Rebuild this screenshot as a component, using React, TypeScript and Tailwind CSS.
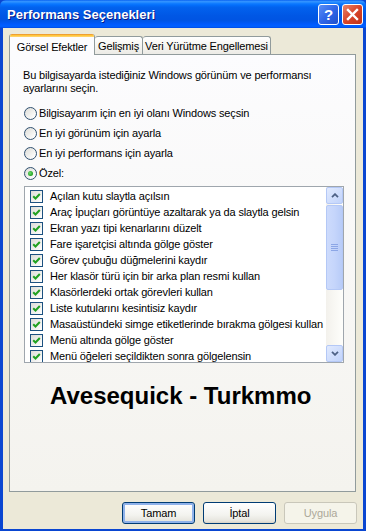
import React from "react";

const items = [
  "Açılan kutu slaytla açılsın",
  "Araç İpuçları görüntüye azaltarak ya da slaytla gelsin",
  "Ekran yazı tipi kenarlarını düzelt",
  "Fare işaretçisi altında gölge göster",
  "Görev çubuğu düğmelerini kaydır",
  "Her klasör türü için bir arka plan resmi kullan",
  "Klasörlerdeki ortak görevleri kullan",
  "Liste kutularını kesintisiz kaydır",
  "Masaüstündeki simge etiketlerinde bırakma gölgesi kullan",
  "Menü altında gölge göster",
  "Menü öğeleri seçildikten sonra gölgelensin",
];

function Check() {
  return (
    <div className="w-[13px] h-[13px] shrink-0 border border-[#1C5180] bg-[linear-gradient(135deg,#dcdcd7_0%,#ffffff_100%)] flex items-center justify-center">
      <svg width="9" height="9" viewBox="0 0 9 9">
        <path d="M1.2 4.2 L3.5 6.5 L7.8 2" stroke="#21A121" strokeWidth="2" fill="none" />
      </svg>
    </div>
  );
}

function Radio({ on }: { on?: boolean }) {
  return (
    <div className="w-[13px] h-[13px] shrink-0 rounded-full border border-[#2F4F6F] bg-[linear-gradient(135deg,#dcdcd7_0%,#ffffff_90%)] flex items-center justify-center">
      {on && <div className="w-[5px] h-[5px] rounded-full bg-[radial-gradient(circle_at_40%_40%,#6fdc6f_0%,#21a121_70%)]" />}
    </div>
  );
}

function Btn({ label, def, disabled }: { label: string; def?: boolean; disabled?: boolean }) {
  return (
    <div
      className={
        "w-[73px] h-[22px] rounded-[3px] border flex items-center justify-center text-[11px] " +
        (disabled
          ? "border-[#C9C7BA] bg-[#F5F4EA] text-[#ACA899]"
          : "border-[#003C74] text-black bg-[linear-gradient(to_bottom,#ffffff_0%,#f3f3ef_60%,#e6e5de_90%,#d6d0c5_100%)]") +
        (def ? " shadow-[inset_0_0_0_2px_#8FB2EA]" : "")
      }
    >
      {label}
    </div>
  );
}

export default function App() {
  return (
    <div className="w-[366px] h-[531px] flex flex-col bg-[#0A46D1] font-['Liberation_Sans',sans-serif] text-[11px] tracking-[-0.15px] text-black overflow-hidden">
      {/* title bar */}
      <div className="h-[28px] shrink-0 flex items-center pl-[7px] pr-[3px] rounded-t-[6px] bg-[linear-gradient(to_bottom,#0058EE_0%,#3593FF_4%,#288EFF_8%,#127DFF_12%,#036FFC_18%,#0262EE_26%,#0057E5_56%,#0054E3_72%,#005BFF_88%,#0061FF_94%,#0048E6_100%)]">
        <div className="flex-1 text-white font-bold text-[13px] tracking-normal [text-shadow:1px_1px_#0A1883] pt-[1px]">
          Performans Seçenekleri
        </div>
        <div className="flex gap-[3px]">
          <div className="w-[21px] h-[21px] rounded-[3px] border border-white bg-[linear-gradient(135deg,#5b8ff6_0%,#2f66e8_50%,#1f4fcc_100%)] flex items-center justify-center text-white font-bold text-[15px] leading-none">
            ?
          </div>
          <div className="w-[21px] h-[21px] rounded-[3px] border border-white bg-[linear-gradient(135deg,#e9856b_0%,#d8452a_50%,#c03218_100%)] flex items-center justify-center">
            <svg width="13" height="13" viewBox="0 0 13 13">
              <path d="M2 2 L11 11 M11 2 L2 11" stroke="white" strokeWidth="2.4" strokeLinecap="square" />
            </svg>
          </div>
        </div>
      </div>

      {/* body */}
      <div className="flex-1 ml-[3px] mr-[3px] mb-[2px] bg-[#ECE9D8] flex flex-col">
        {/* tabs */}
        <div className="mt-[6px] ml-[6px] h-[20px] flex items-end">
          <div className="relative z-10 w-[86px] h-[21px] -mb-[1px] bg-[#FCFCFE] border-x border-[#919B9C] rounded-t-[3px] overflow-hidden flex flex-col">
            <div className="h-[3px] bg-[linear-gradient(to_bottom,#E68B2C_0%,#FFC73C_50%,#FFD77A_100%)]" />
            <div className="flex-1 flex items-start justify-center pt-[2px]">Görsel Efektler</div>
          </div>
          <div className="w-[48px] h-[18px] border border-b-0 border-l-0 border-[#919B9C] rounded-t-[3px] bg-[linear-gradient(to_bottom,#ffffff_0%,#f4f3ee_60%,#ecebe6_100%)] flex items-center justify-center pt-[1px]">
            Gelişmiş
          </div>
          <div className="w-[128px] h-[18px] border border-b-0 border-l-0 border-[#919B9C] rounded-t-[3px] bg-[linear-gradient(to_bottom,#ffffff_0%,#f4f3ee_60%,#ecebe6_100%)] flex items-center justify-center pt-[1px]">
            Veri Yürütme Engellemesi
          </div>
        </div>

        {/* panel */}
        <div className="ml-[6px] w-[347px] h-[438px] border border-[#919B9C] bg-[linear-gradient(to_bottom,#FCFCFE_0%,#F4F3EE_100%)] flex flex-col">
          <div className="mt-[14px] ml-[13px] leading-[13px] w-[300px]">
            Bu bilgisayarda istediğiniz Windows görünüm ve performansı ayarlarını seçin.
          </div>
          <div className="mt-[8px] ml-[14px] flex flex-col">
            {[
              ["Bilgisayarım için en iyi olanı Windows seçsin", false],
              ["En iyi görünüm için ayarla", false],
              ["En iyi performans için ayarla", false],
              ["Özel:", true],
            ].map(([t, on]) => (
              <div key={t as string} className="h-[20px] flex items-center gap-[2px]">
                <Radio on={on as boolean} />
                <span>{t as string}</span>
              </div>
            ))}
          </div>

          {/* list */}
          <div className="mt-[3px] ml-[14px] w-[320px] h-[177px] border border-[#9FA6AD] bg-white flex">
            <div className="flex-1 overflow-hidden pt-[1px]">
              {items.map((t) => (
                <div key={t} className="h-[16px] flex items-center pl-[5px] gap-[7px] whitespace-nowrap">
                  <Check />
                  <span>{t}</span>
                </div>
              ))}
            </div>
            <div className="w-[17px] flex flex-col bg-[linear-gradient(to_right,#F3F1EC_0%,#FEFEFB_100%)]">
              <div className="h-[17px] rounded-[2px] border border-[#B4C8F6] bg-[linear-gradient(135deg,#E1EAFE_0%,#C1D3FB_100%)] flex items-center justify-center">
                <svg width="8" height="5" viewBox="0 0 8 5">
                  <path d="M1 4.2 L4 1.2 L7 4.2" stroke="#4D6185" strokeWidth="1.8" fill="none" />
                </svg>
              </div>
              <div className="flex-1 flex flex-col">
                <div className="mt-[1px] h-[85px] rounded-[2px] border border-[#B4C8F6] bg-[linear-gradient(to_right,#CDDBFC_0%,#C5D5FB_50%,#B8CCF8_100%)] flex flex-col items-center justify-center gap-[1px]">
                  <div className="w-[7px] h-[1px] bg-[#8CA6E6]" />
                  <div className="w-[7px] h-[1px] bg-[#8CA6E6]" />
                  <div className="w-[7px] h-[1px] bg-[#8CA6E6]" />
                  <div className="w-[7px] h-[1px] bg-[#8CA6E6]" />
                </div>
              </div>
              <div className="h-[17px] rounded-[2px] border border-[#B4C8F6] bg-[linear-gradient(135deg,#E1EAFE_0%,#C1D3FB_100%)] flex items-center justify-center">
                <svg width="8" height="5" viewBox="0 0 8 5">
                  <path d="M1 0.8 L4 3.8 L7 0.8" stroke="#4D6185" strokeWidth="1.8" fill="none" />
                </svg>
              </div>
            </div>
          </div>

          <div className="mt-[19px] ml-[40px] text-[24px] leading-[28px] tracking-normal font-bold">Avesequick - Turkmmo</div>
        </div>

        {/* buttons */}
        <div className="mt-[10px] flex justify-end gap-[8px] pr-[6px]">
          <Btn label="Tamam" def />
          <Btn label="İptal" />
          <Btn label="Uygula" disabled />
        </div>
      </div>
    </div>
  );
}
